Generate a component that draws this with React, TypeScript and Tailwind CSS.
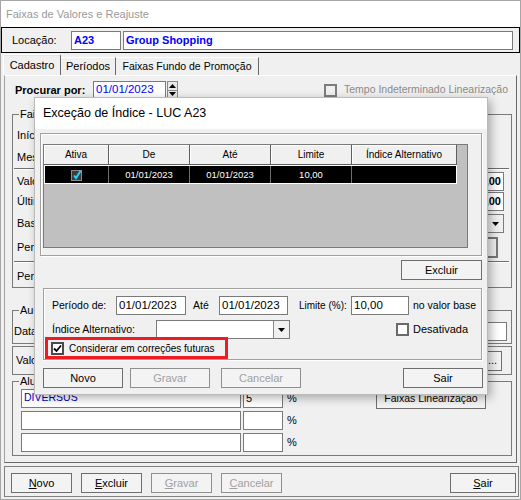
import React from 'react';

const font = "font-['Liberation_Sans',Arial,sans-serif]";

function Field({ className = '', children }: { className?: string; children?: React.ReactNode }) {
  return (
    <div className={`h-[19px] shrink-0 bg-white border border-[#7a7a7a] flex items-center px-[2px] whitespace-nowrap overflow-hidden ${className}`}>
      {children}
    </div>
  );
}

function Btn({ className = '', disabled = false, children }: { className?: string; disabled?: boolean; children: React.ReactNode }) {
  return (
    <button
      type="button"
      className={`h-[20px] shrink-0 border bg-[#f3f3f3] flex items-center justify-center leading-none ${
        disabled ? 'border-[#8f8f8f] text-[#a0a0a0]' : 'border-[#6e6e6e] text-black'
      } ${className}`}
    >
      {children}
    </button>
  );
}

function Arrow({ up = false }: { up?: boolean }) {
  return (
    <svg width="7" height="4" viewBox="0 0 7 4">
      <polygon points={up ? '0,4 7,4 3.5,0' : '0,0 7,0 3.5,4'} fill="#000" />
    </svg>
  );
}

function Combo({ className = '' }: { className?: string }) {
  return (
    <div className={`h-[19px] shrink-0 bg-white border border-[#7a7a7a] flex justify-end ${className}`}>
      <div className="w-[16px] h-full bg-[#f0f0f0] border-l border-[#8a8a8a] flex items-center justify-center">
        <Arrow />
      </div>
    </div>
  );
}

function Box({ checked = false, dim = false }: { checked?: boolean; dim?: boolean }) {
  return (
    <span
      className={`w-[13px] h-[13px] shrink-0 border-2 flex items-center justify-center ${
        dim ? 'border-[#7d7d7d] bg-[#f0f0f0]' : checked ? 'border-[#4a4a4a] bg-white' : 'border-[#6a6a6a] bg-white'
      }`}
    >
      {checked && (
        <svg width="9" height="9" viewBox="0 0 9 9">
          <path d="M1 4.5 L3.5 7 L8 1.5" stroke="#000" strokeWidth="1.8" fill="none" />
        </svg>
      )}
    </span>
  );
}

function Hr({ className = '' }: { className?: string }) {
  return <div className={`mr-[1px] h-[2px] border-t border-[#6e6e6e] border-b border-b-white ${className}`} />;
}

const cols = [
  { name: 'Ativa', w: 'w-[65px]' },
  { name: 'De', w: 'w-[81px]' },
  { name: 'Até', w: 'w-[81px]' },
  { name: 'Limite', w: 'w-[81px]' },
  { name: 'Índice Alternativo', w: 'w-[105px]' },
];

export default function App() {
  return (
    <div className={`relative w-[521px] h-[500px] overflow-hidden bg-[#f0f0f0] text-black text-[11px] ${font}`}>
      <div className="flex flex-col h-full border-x border-b border-[#a6a6a6]">
        {/* window title */}
        <div className="h-[27px] shrink-0 bg-white border-t border-[#a6a6a6] flex items-center pl-[5px] text-[#999]">
          Faixas de Valores e Reajuste
        </div>

        {/* location */}
        <div className="h-[26px] shrink-0 border border-black flex items-center">
          <span className="w-[69px] pl-[10px]">Locação:</span>
          <Field className="w-[50px] font-bold text-[#0000ff]">A23</Field>
          <Field className="w-[390px] ml-[2px] font-bold text-[#0000ff]">Group Shopping</Field>
        </div>

        {/* tabs */}
        <div className="h-[21px] mt-[1px] shrink-0 flex items-end pl-[2px]">
          <div className="h-[21px] w-[58px] border-t border-l border-white border-r border-r-[#696969] rounded-t-[2px] flex items-center justify-center shadow-[inset_0_1px_0_#e3e3e3]">
            Cadastro
          </div>
          <div className="h-[18px] w-[55px] border-t border-white border-r border-r-[#696969] flex items-center justify-center">
            Períodos
          </div>
          <div className="h-[18px] w-[143px] border-t border-white border-r border-r-[#696969] flex items-center justify-center text-[10.5px]">
            Faixas Fundo de Promoção
          </div>
        </div>

        {/* tab page */}
        <div className="mx-[3px] h-[388px] shrink-0 border border-t-white border-l-[#a0a0a0] border-r-[#696969] border-b-[#696969] flex flex-col">
          <div className="mt-[5px] h-[18px] flex items-center pl-[10px] pr-[8px]">
            <span className="w-[78px] font-bold">Procurar por:</span>
            <div className="w-[73px] h-[18px] bg-white border border-[#7a7a7a] flex items-center pl-[2px] text-[#0000ff] text-[11.5px]">
              01/01/2023
            </div>
            <div className="ml-[1px] w-[11px] h-[18px] border border-[#8a8a8a] bg-[#e8e8e8] flex flex-col">
              <div className="flex-1 flex items-center justify-center border-b border-[#8a8a8a]">
                <Arrow up />
              </div>
              <div className="flex-1 flex items-center justify-center">
                <Arrow />
              </div>
            </div>
            <div className="ml-auto flex items-center gap-[7px] text-[#8a8a8a] text-[10.5px]">
              <Box dim />
              <span>Tempo Indeterminado Linearização</span>
            </div>
          </div>

          <fieldset className="mt-[9px] ml-[7px] w-[500px] border border-[#7a7a7a] px-[1px] pb-[1px]">
            <legend className="ml-[5px] px-[1px] leading-[12px]">Faixas de Valores</legend>
            <div className="flex flex-col">
              <div className="mt-[6px] h-[19px] flex items-center pl-[3px]">
                <span className="w-[100px]">Início:</span>
                <Field className="w-[80px]">01/01/2023</Field>
              </div>
              <div className="mt-[3px] h-[19px] flex items-center pl-[3px]">
                <span className="w-[100px]">Mes Base:</span>
                <Field className="w-[80px]">Janeiro</Field>
              </div>
              <Hr className="mt-[1px]" />
              <div className="mt-[2px] h-[19px] flex items-center justify-between pl-[3px] pr-[6px]">
                <span>Valor Inicial:</span>
                <Field className="w-[100px] justify-end font-bold">0,00</Field>
              </div>
              <div className="mt-[1px] h-[19px] flex items-center justify-between pl-[3px] pr-[6px]">
                <span>Último Valor:</span>
                <Field className="w-[100px] justify-end font-bold">0,00</Field>
              </div>
              <div className="mt-[3px] h-[19px] flex items-center justify-between pl-[3px] pr-[6px]">
                <span>Base de Cálculo:</span>
                <Combo className="w-[120px]" />
              </div>
              <div className="mt-[4px] h-[21px] flex items-center justify-between pl-[3px] pr-[12px]">
                <span>Periodicidade:</span>
                <div className="w-[80px] h-[21px] border-2 border-[#777] bg-[#f0f0f0]" />
              </div>
              <Hr className="mt-[3px]" />
              <div className="mt-[4px] h-[19px] flex items-center pl-[3px]">
                <span className="w-[100px]">Período:</span>
                <Field className="w-[80px]" />
              </div>
            </div>
          </fieldset>

          <fieldset className="mt-[16px] ml-[7px] w-[500px] border border-[#7a7a7a] px-[1px] pt-[6px] pb-[2px]">
            <legend className="ml-[5px] px-[1px] leading-[12px]">Auditoria</legend>
            <div className="h-[19px] flex items-center justify-between pr-[3px]">
              <span>Data Cadastro:</span>
              <Field className="w-[120px]" />
            </div>
          </fieldset>

          <div className="mt-[2px] ml-[7px] w-[500px] h-[29px] border border-[#7a7a7a] flex items-center justify-between pl-[3px] pr-[9px]">
            <span>Valor Fundo:</span>
            <Btn className="w-[19px]">...</Btn>
          </div>

          <fieldset className="ml-[7px] w-[500px] border border-[#7a7a7a] px-[1px] pb-[4px]">
            <legend className="ml-[5px] px-[1px] leading-[12px]">Aluguel Percentual</legend>
            <div className="h-[22px] flex items-center pl-[7px]">
              <Field className="w-[220px] h-[18px] text-[#0000c0] text-[10.5px]">DIVERSUS</Field>
              <Field className="w-[40px] h-[18px] ml-[2px]">5</Field>
              <span className="ml-[4px] w-[10px]">%</span>
              <Btn className="ml-[79px] w-[110px] h-[21px] text-[10.5px]">Faixas Linearização</Btn>
            </div>
            <div className="mt-[2px] h-[18px] flex items-center pl-[7px]">
              <Field className="w-[220px] h-[18px]" />
              <Field className="w-[40px] h-[18px] ml-[2px]" />
              <span className="ml-[4px]">%</span>
            </div>
            <div className="mt-[4px] h-[18px] flex items-center pl-[7px]">
              <Field className="w-[220px] h-[18px]" />
              <Field className="w-[40px] h-[18px] ml-[2px]" />
              <span className="ml-[4px]">%</span>
            </div>
          </fieldset>
        </div>

        {/* bottom bar */}
        <div className="mt-[3px] ml-[3px] mr-[1px] h-[31px] shrink-0 border border-[#808080] flex items-start pt-[6px] pl-[6px] pr-[2px]">
          <Btn className="w-[61px]"><span><span className="underline">N</span>ovo</span></Btn>
          <Btn className="w-[61px] ml-[9px]"><span><span className="underline">E</span>xcluir</span></Btn>
          <Btn className="w-[61px] ml-[9px]" disabled><span><span className="underline">G</span>ravar</span></Btn>
          <Btn className="w-[61px] ml-[9px]" disabled><span><span className="underline">C</span>ancelar</span></Btn>
          <Btn className="w-[66px] ml-auto"><span><span className="underline">S</span>air</span></Btn>
        </div>
      </div>

      {/* modal dialog */}
      <div className="absolute left-[34px] top-[97px] w-[454px] h-[298px] bg-[#f0f0f0] border border-[#bababa] shadow-[3px_3px_9px_rgba(0,0,0,0.3)] flex flex-col text-[10.5px]">
        <div className="h-[31px] shrink-0 bg-white flex items-center pl-[8px] text-[12.5px]">Exceção de Índice - LUC A23</div>

        <div className="mt-[4px] ml-[5px] w-[442px] h-[123px] shrink-0 border border-[#a0a0a0] shadow-[inset_1px_1px_0_#fff,1px_1px_0_#fff]">
          <div className="mt-[10px] ml-[2px] w-[425px] h-[104px] bg-[#c0c0c0] border border-[#7a7a7a] flex flex-col">
            <div className="flex h-[20px]">
              {cols.map((c) => (
                <div
                  key={c.name}
                  className={`${c.w} h-[20px] bg-[#f0f0f0] border-r border-b border-[#5f5f5f] shadow-[inset_1px_1px_0_#fff] flex items-center justify-center text-[10px]`}
                >
                  {c.name}
                </div>
              ))}
            </div>
            <div className="flex w-[413px] h-[19px] bg-black border border-white text-white text-[9.5px]">
              <div className="w-[64px] border-r border-[#6d6d6d] flex items-center justify-center">
                <svg width="11" height="12" viewBox="0 0 11 12">
                  <rect x="0.5" y="1.5" width="10" height="10" fill="#3c3c3c" stroke="#8c8c8c" />
                  <path d="M3 6.5 L5 9 L9.5 2" stroke="#22d8ff" strokeWidth="2" fill="none" />
                </svg>
              </div>
              <div className="w-[81px] border-r border-[#6d6d6d] flex justify-center pt-[2px]">01/01/2023</div>
              <div className="w-[81px] border-r border-[#6d6d6d] flex justify-center pt-[2px]">01/01/2023</div>
              <div className="w-[81px] border-r border-[#6d6d6d] flex justify-center pt-[2px]">10,00</div>
              <div className="w-[104px]" />
            </div>
          </div>
        </div>

        <div className="mt-[4px] mr-[5px] flex justify-end">
          <Btn className="w-[81px] text-[11px]">Excluir</Btn>
        </div>

        <div className="mt-[8px] ml-[8px] w-[439px] h-[72px] shrink-0 border border-[#a0a0a0] shadow-[inset_1px_1px_0_#fff,1px_1px_0_#fff] flex flex-col">
          <div className="mt-[7px] h-[19px] flex items-center pl-[8px]">
            <span className="w-[64px]">Período de:</span>
            <Field className="w-[70px] text-[11.5px]">01/01/2023</Field>
            <span className="ml-[7px] w-[26px]">Até</span>
            <Field className="w-[69px] text-[11.5px]">01/01/2023</Field>
            <span className="ml-[11px] w-[52px] text-[10px]">Limite (%):</span>
            <Field className="w-[58px] text-[11.5px]">10,00</Field>
            <span className="ml-[4px]">no valor base</span>
          </div>
          <div className="mt-[5px] h-[19px] flex items-center pl-[8px]">
            <span className="w-[104px]">Índice Alternativo:</span>
            <Combo className="w-[134px]" />
            <span className="ml-[106px] flex items-center gap-[4px] text-[11px]">
              <Box />
              Desativada
            </span>
          </div>
          <div className="relative mt-[-2px] ml-[1px] w-[183px] h-[24px] border-[3px] border-[#ed1c24] flex items-center gap-[5px] pl-[3px] text-[10px]">
            <Box checked />
            <span className="whitespace-nowrap">Considerar em correções futuras</span>
          </div>
        </div>

        <div className="mt-[8px] ml-[8px] mr-[4px] flex text-[11px]">
          <Btn className="w-[80px]">Novo</Btn>
          <Btn className="w-[80px] ml-[7px]" disabled>Gravar</Btn>
          <Btn className="w-[80px] ml-[11px]" disabled>Cancelar</Btn>
          <Btn className="w-[80px] ml-auto">Sair</Btn>
        </div>
      </div>
    </div>
  );
}
